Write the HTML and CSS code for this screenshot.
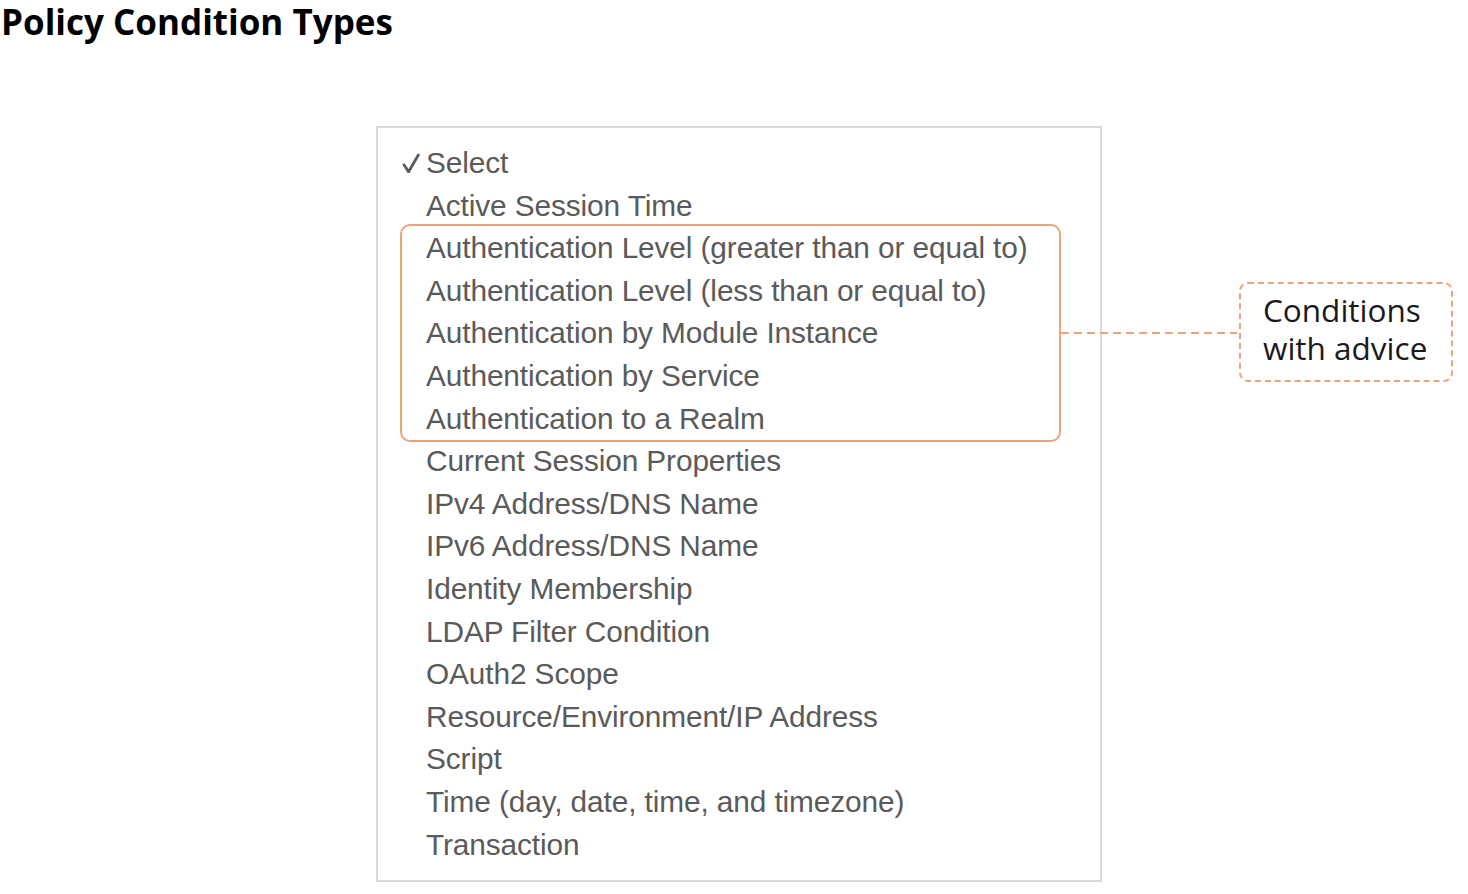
FILE: index.html
```html
<!DOCTYPE html>
<html>
<head>
<meta charset="utf-8">
<link rel="stylesheet" href="styles.css">
</head>
<body>
<h1 class="title">Policy Condition Types</h1>
<div class="stage">
  <div class="menu">
    <div class="item selected"><svg class="check" width="20" height="22" viewBox="0 0 20 22"><path d="M1.2 12.6 L3.4 11.2 L7.6 17.0 L16.6 1.4 L19.2 2.6 L8.6 21.0 L6.6 21.0 Z" fill="#5a5a5a"/></svg>Select</div>
    <div class="item">Active Session Time</div>
    <div class="group">
      <div class="item">Authentication Level (greater than or equal to)</div>
      <div class="item">Authentication Level (less than or equal to)</div>
      <div class="item">Authentication by Module Instance</div>
      <div class="item">Authentication by Service</div>
      <div class="item">Authentication to a Realm</div>
      <div class="connector"></div>
    </div>
    <div class="item">Current Session Properties</div>
    <div class="item">IPv4 Address/DNS Name</div>
    <div class="item">IPv6 Address/DNS Name</div>
    <div class="item">Identity Membership</div>
    <div class="item">LDAP Filter Condition</div>
    <div class="item">OAuth2 Scope</div>
    <div class="item">Resource/Environment/IP Address</div>
    <div class="item">Script</div>
    <div class="item">Time (day, date, time, and timezone)</div>
    <div class="item">Transaction</div>
  </div>
  <div class="callout">
    <div class="callout-line">Conditions</div>
    <div class="callout-line">with advice</div>
  </div>
</div>
</body>
</html>
```
FILE: styles.css
```css
html, body {
  margin: 0;
  padding: 0;
  background: #ffffff;
}
.title {
  margin: 0;
  padding: 0 0 0 1px;
  font-family: "Open Sans", sans-serif;
  font-weight: 700;
  font-size: 35px;
  line-height: 44px;
  color: #000;
}
.stage {
  display: flex;
  align-items: flex-start;
  margin-top: 82px;
  margin-left: 376px;
}
.menu {
  width: 722px;
  border: 2px solid #dadada;
  padding: 14px 0 14px 0;
  font-family: "Liberation Sans", Arial, sans-serif;
  font-size: 29.8px;
  letter-spacing: -0.1px;
  color: #5a5a5a;
}
.item {
  height: 42.6px;
  line-height: 42.6px;
  padding-left: 48px;
  white-space: nowrap;
}
.selected {
  display: flex;
  align-items: center;
  padding-left: 23px;
}
.check {
  display: block;
  margin-right: 5px;
  margin-top: -1px;
}
.group {
  position: relative;
  margin: -3px 0 -2px 22px;
  padding-top: 1px;
  width: 657px;
  border: 2px solid #eba37a;
  border-radius: 10px;
}
.group .item {
  padding-left: 24px;
}
.connector {
  position: absolute;
  left: 100%;
  top: 106px;
  width: 176px;
  height: 2px;
  margin-left: 2px;
  background: repeating-linear-gradient(to right, #eba37a 0 8px, transparent 8px 13px);
}
.callout {
  margin-top: 156px;
  margin-left: 137px;
  width: 214px;
  height: 100px;
  box-sizing: border-box;
  border: 2px dashed #eba37a;
  border-radius: 9px;
  padding: 9px 0 0 22px;
  font-family: "Open Sans", sans-serif;
  font-size: 31.5px;
  color: #1a1a1a;
}
.callout-line {
  height: 38px;
  line-height: 34px;
  white-space: nowrap;
}
```
